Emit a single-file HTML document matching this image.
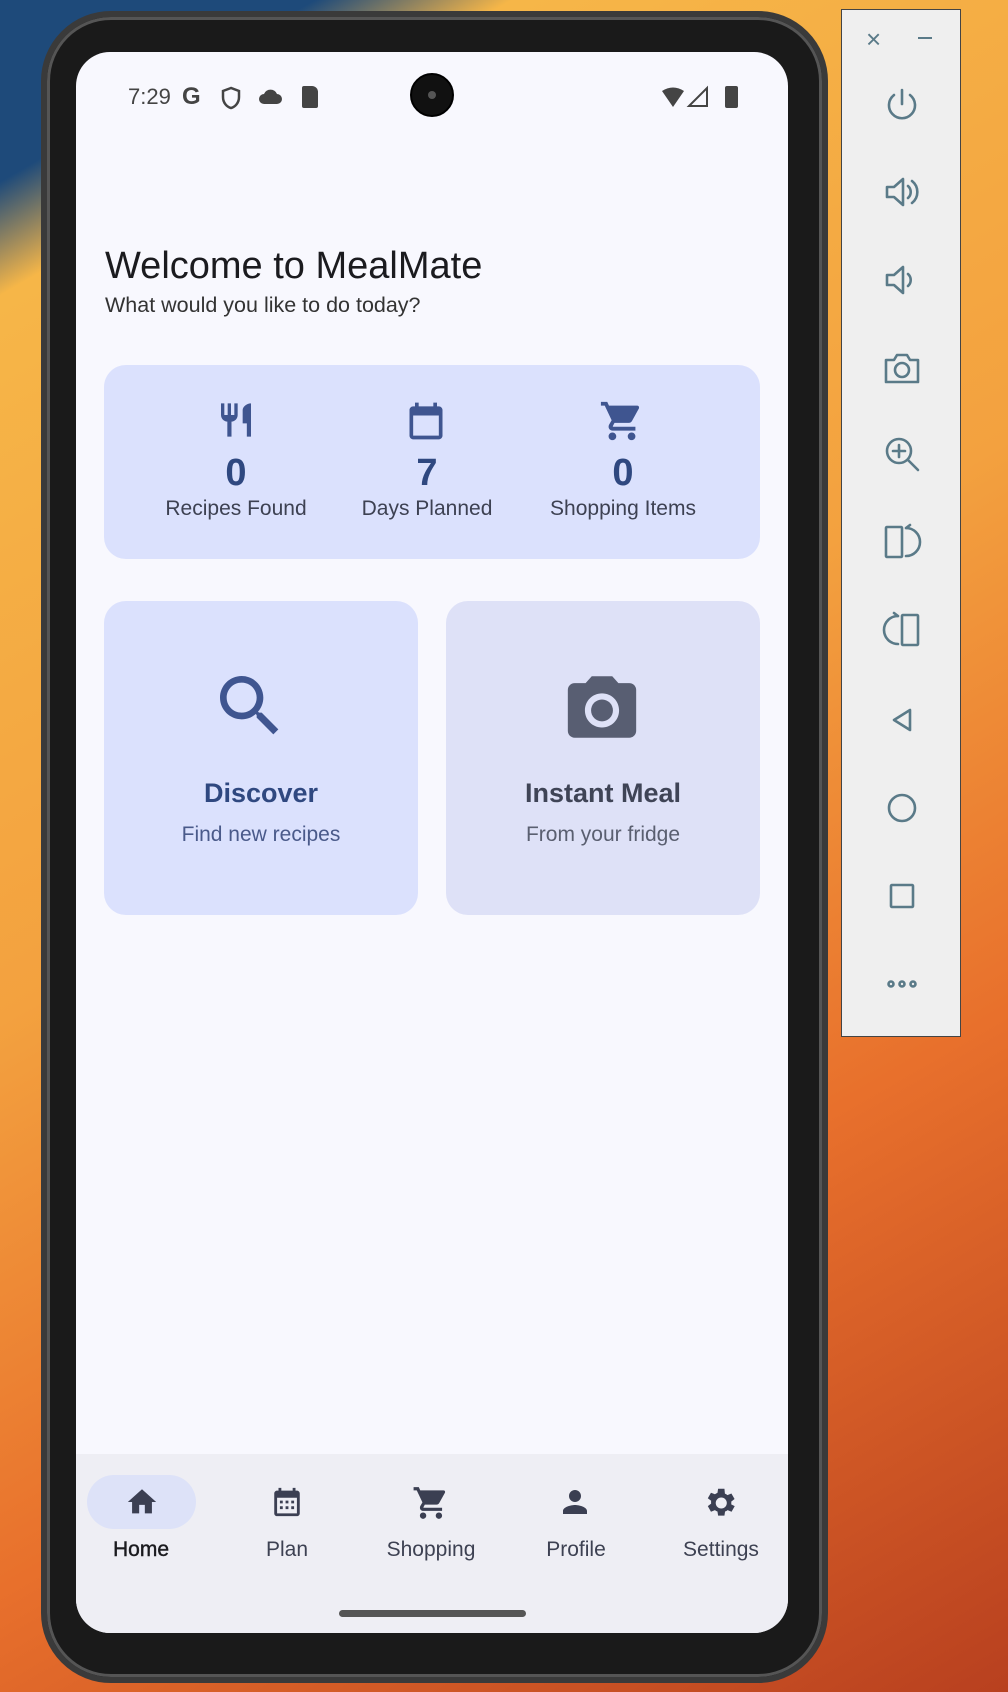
<!DOCTYPE html>
<html><head><meta charset="utf-8"><style>
*{margin:0;padding:0;box-sizing:border-box}
body{width:1008px;height:1692px;overflow:hidden;position:relative;font-family:"Liberation Sans",sans-serif;
background:linear-gradient(150deg,#1e4a7a 0%,#1e4a7a 8%,#f6b648 13%,#f3a13f 45%,#e8702c 70%,#b8401f 100%);}
.abs{position:absolute}
.phone{left:41px;top:11px;width:787px;height:1672px;border-radius:70px;background:#1a1a1a;border:6px solid #3a3a3a;box-shadow:inset 0 0 0 3px #555}
.screen{left:76px;top:52px;width:712px;height:1581px;border-radius:34px;background:#f8f8fe;overflow:hidden}
.t{position:absolute;white-space:nowrap}
.c{text-align:center;transform:translateX(-50%)}
.side{left:841px;top:9px;width:120px;height:1028px;background:#efefef;border:1px solid #444}
svg.si{position:absolute;left:40px;width:40px;height:40px;fill:none;stroke:#5a7a88;stroke-width:2.6;stroke-linecap:round;stroke-linejoin:round}
</style></head><body>
<div class="abs phone"></div>
<div class="abs screen">
  <div class="t" style="left:52px;top:32px;font-size:22px;color:#444">7:29</div>
  <div class="t" style="left:106px;top:31px;font-size:24px;font-weight:bold;color:#444">G</div>
  <svg class="abs" style="left:144px;top:34px" width="22" height="24" viewBox="0 0 22 24"><path d="M11 2L3 5v6c0 6 4 10 8 11 4-1 8-5 8-11V5z" fill="none" stroke="#444" stroke-width="2.5"/></svg>
  <svg class="abs" style="left:182px;top:36px" width="26" height="18" viewBox="0 0 26 18"><path d="M6 16a5 5 0 010-10 7 7 0 0113 0 5 5 0 010 10z" fill="#444"/></svg>
  <div class="abs" style="left:226px;top:34px;width:16px;height:22px;background:#444;border-radius:2px 6px 2px 2px"></div>
  <div class="abs" style="left:334px;top:21px;width:44px;height:44px;border-radius:50%;background:#111;border:2px solid #000"></div>
  <div class="abs" style="left:352px;top:39px;width:8px;height:8px;border-radius:50%;background:#555"></div>
  <svg class="abs" style="left:585px;top:33px" width="56" height="24" viewBox="0 0 56 24"><path d="M1 6Q12-1 23 6L12 22z" fill="#444"/><path d="M46 3V21H28z" fill="none" stroke="#444" stroke-width="2"/></svg>
  <div class="abs" style="left:649px;top:34px;width:13px;height:22px;background:#444;border-radius:2px"></div>

  <div class="t" style="left:29px;top:193px;font-size:38px;color:#1b1b1f">Welcome to MealMate</div>
  <div class="t" style="left:29px;top:241px;font-size:21.5px;color:#333">What would you like to do today?</div>

  <div class="abs" style="left:28px;top:313px;width:656px;height:194px;border-radius:22px;background:#dbe1fd"></div>
  <svg class="abs" style="left:140px;top:346px" width="40" height="44" viewBox="0 0 24 24" fill="#3f5590"><path d="M11 9H9V2H7v7H5V2H3v7c0 2.1 1.7 3.9 3.8 4v9h2.5v-9c2.1-.1 3.7-1.9 3.7-4V2h-2v7zm5-3v8h2.5v8H21V2c-2.8 0-5 2.2-5 4z"/></svg>
  <svg class="abs" style="left:328px;top:346px" width="44" height="46" viewBox="0 0 24 24" fill="#3f5590"><path d="M19 4h-1V2h-2v2H8V2H6v2H5c-1.1 0-2 .9-2 2v14c0 1.1.9 2 2 2h14c1.1 0 2-.9 2-2V6c0-1.1-.9-2-2-2zm0 16H5V9h14v11z"/></svg>
  <svg class="abs" style="left:523px;top:346px" width="46" height="46" viewBox="0 0 24 24" fill="#3f5590"><path d="M7 18c-1.1 0-2 .9-2 2s.9 2 2 2 2-.9 2-2-.9-2-2-2zM1 2v2h2l3.6 7.6-1.4 2.4c-.1.3-.2.6-.2 1 0 1.1.9 2 2 2h12v-2H7.4c-.1 0-.2-.1-.2-.2v-.1l.9-1.7h7.4c.8 0 1.4-.4 1.7-1l3.6-6.5c.1-.2.1-.3.1-.5 0-.6-.4-1-1-1H5.2l-.9-2H1zm16 16c-1.1 0-2 .9-2 2s.9 2 2 2 2-.9 2-2-.9-2-2-2z"/></svg>
  <div class="t c" style="left:160px;top:400px;font-size:38px;font-weight:bold;color:#2f4880">0</div>
  <div class="t c" style="left:351px;top:400px;font-size:38px;font-weight:bold;color:#2f4880">7</div>
  <div class="t c" style="left:547px;top:400px;font-size:38px;font-weight:bold;color:#2f4880">0</div>
  <div class="t c" style="left:160px;top:445px;font-size:21px;color:#3d4152">Recipes Found</div>
  <div class="t c" style="left:351px;top:445px;font-size:21px;color:#3d4152">Days Planned</div>
  <div class="t c" style="left:547px;top:445px;font-size:21px;color:#3d4152">Shopping Items</div>

  <div class="abs" style="left:28px;top:549px;width:314px;height:314px;border-radius:22px;background:#dbe1fd"></div>
  <div class="abs" style="left:370px;top:549px;width:314px;height:314px;border-radius:22px;background:#dee1f7"></div>
  <svg class="abs" style="left:134px;top:614px" width="80" height="80" viewBox="0 0 24 24" fill="#3f5590"><path d="M15.5 14h-.8l-.3-.3c1-1.1 1.6-2.6 1.6-4.2C16 5.9 13.1 3 9.5 3S3 5.9 3 9.5 5.9 16 9.5 16c1.6 0 3.1-.6 4.2-1.6l.3.3v.8l5 5 1.5-1.5-5-5zm-6 0C7 14 5 12 5 9.5S7 5 9.5 5 14 7 14 9.5 12 14 9.5 14z"/></svg>
  <svg class="abs" style="left:483px;top:614px" width="86" height="82" viewBox="0 0 24 24" fill="#585e72"><circle cx="12" cy="13" r="3.2"/><path d="M9 3L7.2 5H4c-1.1 0-2 .9-2 2v12c0 1.1.9 2 2 2h16c1.1 0 2-.9 2-2V7c0-1.1-.9-2-2-2h-3.2L15 3H9zm3 15c-2.8 0-5-2.2-5-5s2.2-5 5-5 5 2.2 5 5-2.2 5-5 5z"/></svg>
  <div class="t c" style="left:185px;top:726px;font-size:27px;font-weight:bold;color:#2f4880">Discover</div>
  <div class="t c" style="left:527px;top:726px;font-size:27px;font-weight:bold;color:#3f4456">Instant Meal</div>
  <div class="t c" style="left:185px;top:771px;font-size:21px;color:#4a5a8a">Find new recipes</div>
  <div class="t c" style="left:527px;top:771px;font-size:21px;color:#5a5f70">From your fridge</div>

  <div class="abs" style="left:0;top:1402px;width:712px;height:179px;background:#eeeef4"></div>
  <div class="abs" style="left:11px;top:1423px;width:109px;height:54px;border-radius:27px;background:#dde2f8"></div>
  <svg class="abs" style="left:49px;top:1433px" width="34" height="34" viewBox="0 0 24 24" fill="#3b3f52"><path d="M10 20v-6h4v6h5v-8h3L12 3 2 12h3v8z"/></svg>
  <svg class="abs" style="left:194px;top:1432px" width="34" height="36" viewBox="0 0 24 24" fill="#3b3f52"><path d="M19 4h-1V2h-2v2H8V2H6v2H5c-1.1 0-2 .9-2 2v14c0 1.1.9 2 2 2h14c1.1 0 2-.9 2-2V6c0-1.1-.9-2-2-2zm0 16H5V9h14v11z"/><path d="M7 11h2v2H7zm4 0h2v2h-2zm4 0h2v2h-2zM7 15h2v2H7zm4 0h2v2h-2zm4 0h2v2h-2z"/></svg>
  <svg class="abs" style="left:336px;top:1432px" width="38" height="38" viewBox="0 0 24 24" fill="#3b3f52"><path d="M7 18c-1.1 0-2 .9-2 2s.9 2 2 2 2-.9 2-2-.9-2-2-2zM1 2v2h2l3.6 7.6-1.4 2.4c-.1.3-.2.6-.2 1 0 1.1.9 2 2 2h12v-2H7.4c-.1 0-.2-.1-.2-.2v-.1l.9-1.7h7.4c.8 0 1.4-.4 1.7-1l3.6-6.5c.1-.2.1-.3.1-.5 0-.6-.4-1-1-1H5.2l-.9-2H1zm16 16c-1.1 0-2 .9-2 2s.9 2 2 2 2-.9 2-2-.9-2-2-2z"/></svg>
  <svg class="abs" style="left:481px;top:1432px" width="36" height="36" viewBox="0 0 24 24" fill="#3b3f52"><path d="M12 12c2.2 0 4-1.8 4-4s-1.8-4-4-4-4 1.8-4 4 1.8 4 4 4zm0 2c-2.7 0-8 1.3-8 4v2h16v-2c0-2.7-5.3-4-8-4z"/></svg>
  <svg class="abs" style="left:625px;top:1432px" width="38" height="38" viewBox="0 0 24 24" fill="#3b3f52"><path d="M19.1 12.9a7 7 0 000-1.8l2.1-1.6-2-3.5-2.5 1a7 7 0 00-1.6-.9L14.8 3h-4l-.4 2.6c-.6.2-1.1.5-1.6.9l-2.5-1-2 3.5 2.1 1.6a7 7 0 000 1.8l-2.1 1.6 2 3.5 2.5-1c.5.4 1 .7 1.6.9l.4 2.6h4l.4-2.6c.6-.2 1.1-.5 1.6-.9l2.5 1 2-3.5zM12.8 15.5a3.5 3.5 0 110-7 3.5 3.5 0 010 7z"/></svg>
  <div class="t c" style="left:65px;top:1486px;font-size:21px;color:#1b1b1f;-webkit-text-stroke:0.4px #1b1b1f">Home</div>
  <div class="t c" style="left:211px;top:1486px;font-size:21px;color:#3d4152">Plan</div>
  <div class="t c" style="left:355px;top:1486px;font-size:21px;color:#3d4152">Shopping</div>
  <div class="t c" style="left:500px;top:1486px;font-size:21px;color:#3d4152">Profile</div>
  <div class="t c" style="left:645px;top:1486px;font-size:21px;color:#3d4152">Settings</div>
  <div class="abs" style="left:263px;top:1558px;width:187px;height:7px;border-radius:4px;background:#555"></div>
</div>

<div class="abs side">
  <div class="t" style="left:24px;top:14px;font-size:26px;color:#5a7a88">×</div>
  <div class="abs" style="left:76px;top:27px;width:14px;height:2px;background:#5a7a88"></div>
  <svg class="si" style="top:76px" viewBox="0 0 40 40"><path d="M20 4v14"/><path d="M12 9a13 13 0 1016 0"/></svg>
  <svg class="si" style="top:162px" viewBox="0 0 40 40"><path d="M5 15h7l9-8v26l-9-8H5z"/><path d="M26 14a8 8 0 010 12"/><path d="M30 9a14 14 0 010 22"/></svg>
  <svg class="si" style="top:250px" viewBox="0 0 40 40"><path d="M5 15h7l9-8v26l-9-8H5z"/><path d="M26 14a8 8 0 010 12"/></svg>
  <svg class="si" style="top:338px" viewBox="0 0 40 40"><path d="M4 12h8l3-5h10l3 5h8v22H4z"/><circle cx="20" cy="22" r="7"/></svg>
  <svg class="si" style="top:424px" viewBox="0 0 40 40"><circle cx="17" cy="17" r="12"/><path d="M26 26l10 10M17 11v12M11 17h12"/></svg>
  <svg class="si" style="top:512px" viewBox="0 0 40 40"><rect x="4" y="5" width="16" height="30" rx="1"/><path d="M24 6a14 14 0 010 28M24 6l4-3"/></svg>
  <svg class="si" style="top:600px" viewBox="0 0 40 40"><rect x="20" y="5" width="16" height="30" rx="1"/><path d="M16 6a14 14 0 000 28M16 6l-4-3"/></svg>
  <svg class="si" style="top:690px" viewBox="0 0 40 40"><path d="M28 10v20L12 20z"/></svg>
  <svg class="si" style="top:778px" viewBox="0 0 40 40"><circle cx="20" cy="20" r="13"/></svg>
  <svg class="si" style="top:866px" viewBox="0 0 40 40"><rect x="9" y="9" width="22" height="22" rx="1"/></svg>
  <svg class="si" style="top:954px" viewBox="0 0 40 40" fill="#5a7a88"><circle cx="9" cy="20" r="2.5"/><circle cx="20" cy="20" r="2.5"/><circle cx="31" cy="20" r="2.5"/></svg>
</div>
</body></html>
